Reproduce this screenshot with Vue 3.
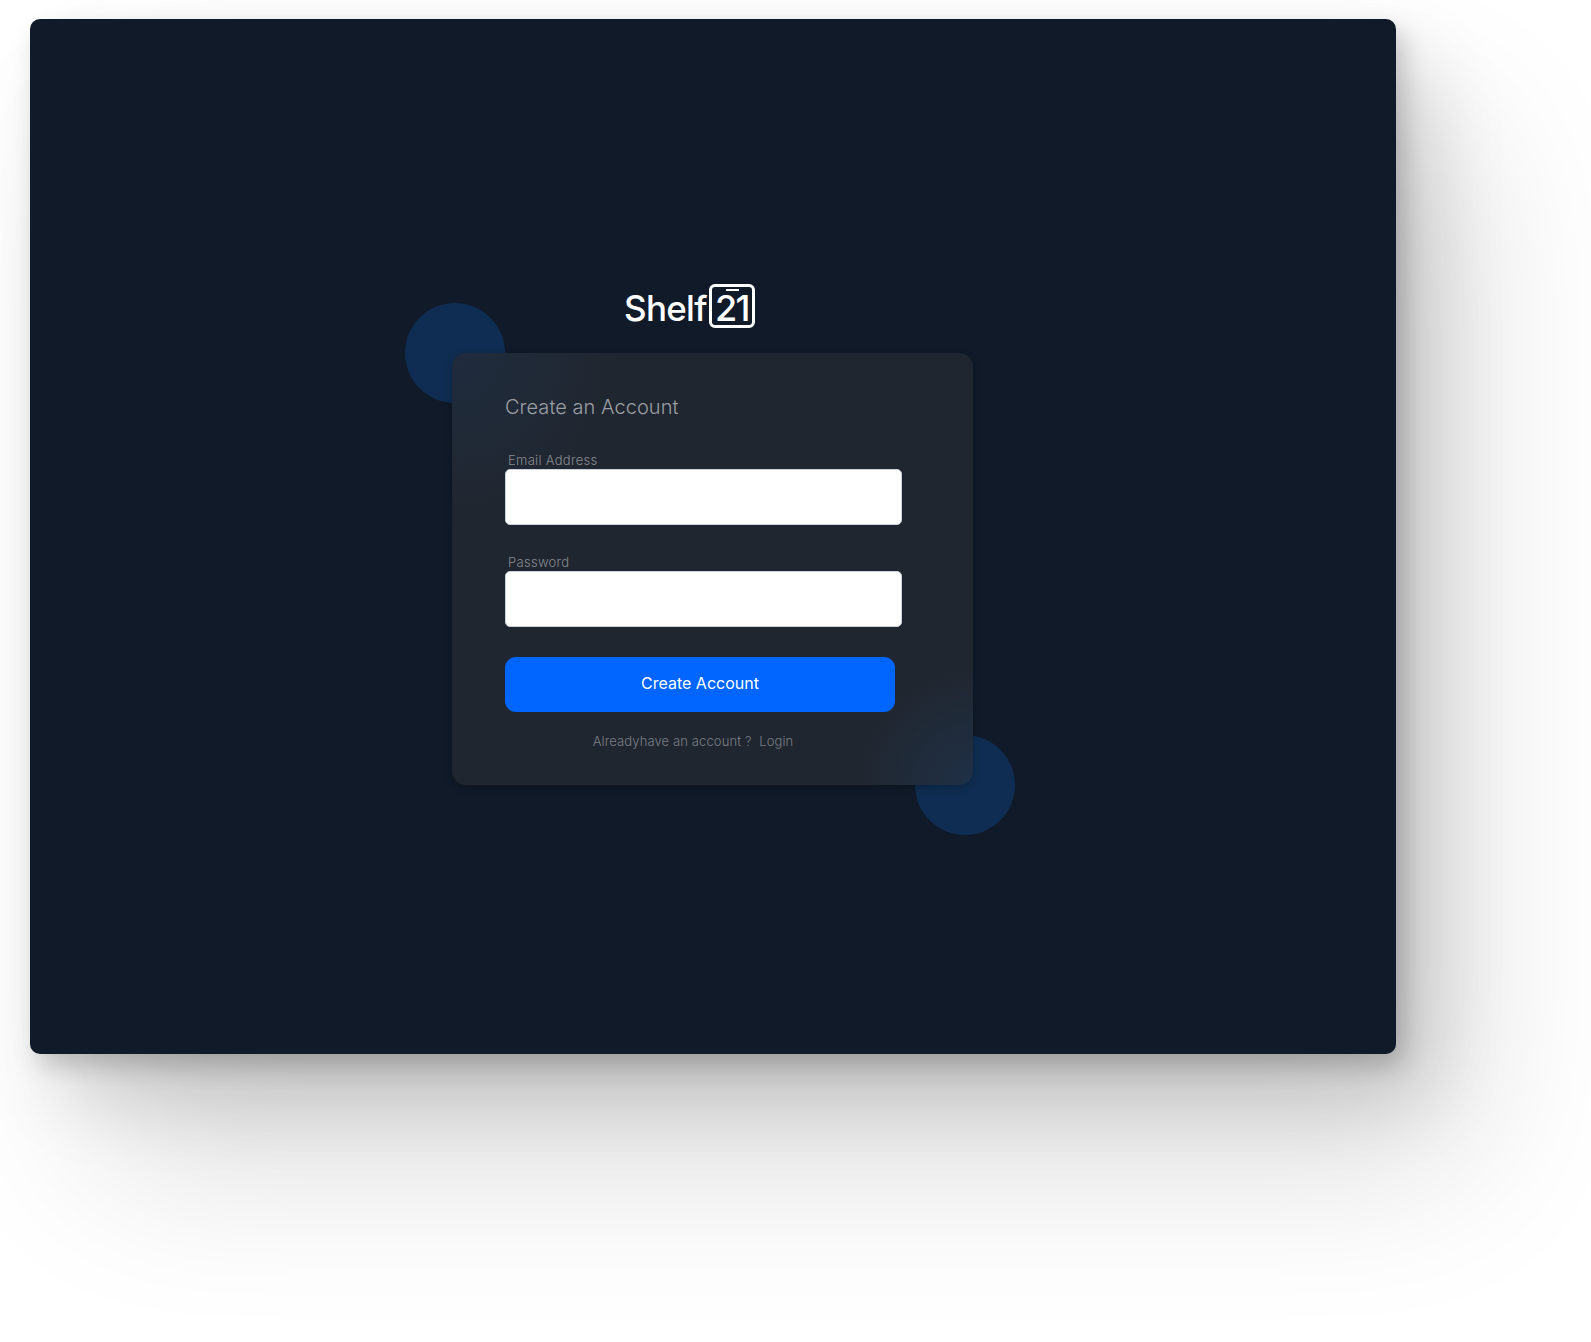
<script setup>
const fields = [
  { label: 'Email Address', type: 'email' },
  { label: 'Password', type: 'password' },
]
</script>

<template>
  <div class="page">
    <main class="panel">
      <span class="orb orb-a"></span>
      <span class="orb orb-b"></span>
      <div class="logo">
        <span class="word">Shelf</span>
        <span class="box"><span class="bar"></span><span class="num">21</span></span>
      </div>
      <section class="card">
        <h1>Create an Account</h1>
        <div v-for="f in fields" :key="f.label" class="field">
          <label>{{ f.label }}</label>
          <input :type="f.type" />
        </div>
        <button type="button">Create Account</button>
        <p class="foot">Alreadyhave an account ?&nbsp; Login</p>
      </section>
    </main>
  </div>
</template>

<style>
html, body { margin: 0; background: #fff; }
</style>

<style scoped>
.page {
  width: 1591px;
  height: 1342px;
  padding: 19px 0 0 30px;
  box-sizing: border-box;
  overflow: hidden;
  background: #fff;
  font-family: Inter, "Liberation Sans", sans-serif;
}
.panel {
  position: relative;
  width: 1366px;
  height: 1035px;
  padding: 265px 0 0 422px;
  box-sizing: border-box;
  border-radius: 10px;
  background: #101a29;
  box-shadow:
    8px 12px 24px rgba(0, 0, 0, 0.18),
    34px 44px 80px rgba(0, 0, 0, 0.14),
    70px 110px 170px rgba(0, 0, 0, 0.14);
}
.orb {
  position: absolute;
  width: 100px;
  height: 100px;
  border-radius: 50%;
  background: #0f2d52;
}
.orb-a { left: 375px; top: 284px; }
.orb-b { left: 885px; top: 716px; }
.logo {
  display: flex;
  align-items: flex-start;
  height: 69px;
  margin-left: 172px;
  color: #fff;
}
.word {
  font: 550 35px/44px Inter, sans-serif;
  letter-spacing: -0.7px;
  margin-top: 2px;
  width: 85px;
}
.box {
  position: relative;
  display: flex;
  justify-content: center;
  width: 46px;
  height: 44px;
  border: 3px solid #fff;
  border-radius: 6px;
  box-sizing: border-box;
}
.bar {
  position: absolute;
  top: 2px;
  left: 14px;
  width: 13px;
  height: 2px;
  background: #fff;
}
.num {
  font: 500 36px/42px Inter, sans-serif;
  letter-spacing: -1.5px;
}
.card {
  position: relative;
  width: 521px;
  height: 432px;
  padding: 40px 0 0 53px;
  box-sizing: border-box;
  border-radius: 14px;
  background:
    radial-gradient(circle 170px at 0 0, #1f2c3e 0%, rgba(31, 44, 62, 0) 100%),
    radial-gradient(circle 120px at 100% 100%, #1f3046 0%, rgba(31, 48, 70, 0) 100%),
    #20262f;
  box-shadow: 0 3px 10px rgba(0, 0, 0, 0.22);
}
h1 {
  margin: 0 0 31px;
  height: 28px;
  font: 300 20px/29px Inter, sans-serif;
  letter-spacing: 0.05px;
  color: #9a9ea4;
}
.field { margin-bottom: 29px; }
label {
  display: block;
  height: 17px;
  margin-left: 3px;
  font: 300 13px/17px Inter, sans-serif;
  letter-spacing: 0.3px;
  color: #868a91;
}
input {
  display: block;
  width: 397px;
  height: 56px;
  padding: 0;
  box-sizing: border-box;
  border: 1px solid #c9d1de;
  border-radius: 5px;
  background: #fff;
}
button {
  display: block;
  width: 390px;
  height: 55px;
  margin-top: 30px;
  padding: 0 0 3px;
  border: 0;
  border-radius: 11px;
  background: #0066ff;
  color: #fff;
  font: 400 16px/20px Inter, sans-serif;
  text-align: center;
}
.foot {
  width: 376px;
  margin: 19px 0 0;
  font: 300 13px/20px Inter, sans-serif;
  letter-spacing: 0.12px;
  color: #7a7f87;
  text-align: center;
}
</style>
